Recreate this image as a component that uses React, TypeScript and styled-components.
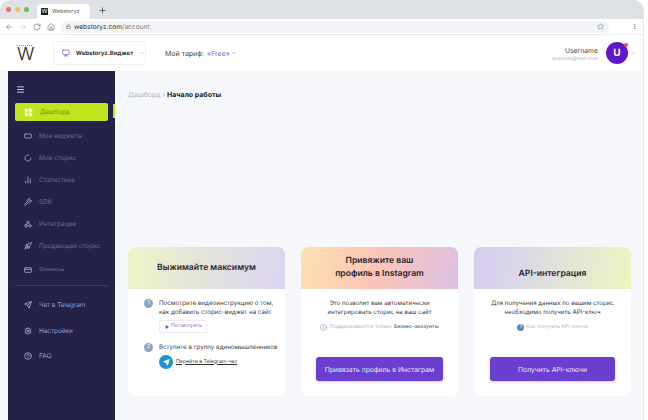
import React from 'react';
import styled, { createGlobalStyle } from 'styled-components';
import { ChevronDown, Plus, X, ArrowLeft, ArrowRight, RotateCw, Home, Lock, Star, MoreVertical, Monitor, Menu, LayoutGrid, RectangleHorizontal, LoaderCircle, BarChart2, Wrench, Shapes, Rocket, CreditCard, Send, Settings, CircleHelp, Play, Info } from 'lucide-react';

const Global = createGlobalStyle`
	html, body {
		margin: 0;
		padding: 0;
		background: #fff;
	}
	body {
		font-family: 'Inter', 'Noto Sans', sans-serif;
		text-rendering: geometricPrecision;
		width: 648px;
		height: 420px;
		overflow: hidden;
	}
`;

const Page = styled.div`
	width: 644px;
	height: 420px;
	display: flex;
	flex-direction: column;
	border-top-right-radius: 10px;
	border-top-left-radius: 10px;
	overflow: hidden;
	border-right: 1px solid #e6e8ec;
	box-sizing: border-box;
`;

const TabBar = styled.div`
	height: 19px;
	background: #dee1e6;
	display: flex;
	align-items: center;
	padding-left: 6px;
	flex-shrink: 0;
`;

const Dot = styled.span<{ $c: string }>`
	width: 5px;
	height: 5px;
	border-radius: 50%;
	margin-right: 4px;
	background: ${(p) => p.$c};
`;

const Tab = styled.div`
	width: 53px;
	height: 15px;
	margin-left: 4px;
	margin-top: 4px;
	background: #fff;
	border-radius: 4px 4px 0 0;
	display: flex;
	align-items: center;
	padding: 0 6px 0 4px;
	box-sizing: border-box;
	color: #555;
	font-size: 5.4px;
	gap: 4px;
`;

const Favicon = styled.span`
	width: 7px;
	height: 7px;
	background: #1b1b1b;
	color: #fff;
	font-size: 6px;
	line-height: 7px;
	text-align: center;
	flex-shrink: 0;
`;

const TabTitle = styled.span`
	flex: 1;
	white-space: nowrap;
`;

const NewTab = styled.span`
	margin-left: 8px;
	margin-top: 2px;
	display: flex;
	color: #444;
`;

const Toolbar = styled.div`
	height: 16px;
	background: #fff;
	display: flex;
	align-items: center;
	padding: 0 5px;
	gap: 6px;
	color: #70757a;
	flex-shrink: 0;
	border-bottom: 1px solid #eceef1;
	box-sizing: border-box;
`;

const Address = styled.div`
	flex: 1;
	height: 12px;
	border-radius: 6px;
	background: #f1f3f4;
	display: flex;
	align-items: center;
	padding: 0 5px;
	gap: 3px;
	margin-right: 16px;
	font-size: 6.6px;
	color: #80868b;
`;

const Host = styled.span`
	color: #333;
`;

const Url = styled.span`
	flex: 1;
`;

const Header = styled.div`
	height: 36px;
	background: #fff;
	display: flex;
	align-items: center;
	flex-shrink: 0;
	padding: 0 7px 0 17px;
`;

const Logo = styled.div`
	width: 15px;
	font-size: 18px;
	font-weight: 300;
	color: #222;
	line-height: 15px;
	margin-right: 21px;
	border-top: 1px dotted #999;
	padding-top: 1px;
`;

const WidgetSelect = styled.div`
	width: 93px;
	height: 24px;
	border: 1px solid #f0f1f4;
	border-radius: 3px;
	display: flex;
	align-items: center;
	padding-left: 8px;
	box-sizing: border-box;
	gap: 6px;
	font-size: 6px;
	font-weight: 700;
	color: #333;
	white-space: nowrap;
`;

const Plan = styled.div`
	margin-left: 19px;
	font-size: 7px;
	color: #444;
	display: flex;
	align-items: center;
	gap: 1px;
	white-space: nowrap;
`;

const PlanValue = styled.span`
	color: #7b63d6;
	margin-left: 2px;
`;

const User = styled.div`
	margin-left: auto;
	display: flex;
	align-items: center;
`;

const UserText = styled.div`
	text-align: right;
	margin-right: 8px;
	padding-top: 2px;
`;

const UserName = styled.div`
	font-size: 6.8px;
	color: #444;
	line-height: 10px;
`;

const UserMail = styled.div`
	font-size: 5px;
	color: #a9bad0;
	line-height: 7px;
`;

const Avatar = styled.div`
	position: relative;
	width: 22px;
	height: 22px;
	border-radius: 50%;
	background: #5f17c9;
	color: #fff;
	font-size: 10px;
	font-weight: 700;
	display: flex;
	align-items: center;
	justify-content: center;
	margin-right: 2px;
`;

const Badge = styled.span`
	position: absolute;
	top: 1px;
	right: 0;
	width: 4px;
	height: 4px;
	border-radius: 50%;
	background: #ef4d3c;
`;

const Body = styled.div`
	flex: 1;
	display: flex;
	background: #f5f7fb;
	min-height: 0;
	padding-left: 8px;
`;

const Sidebar = styled.nav`
	width: 107px;
	background: #25224a;
	flex-shrink: 0;
	display: flex;
	flex-direction: column;
	padding: 14px 0 0 7px;
	box-sizing: border-box;
	position: relative;
`;

const Burger = styled.div`
	height: 18px;
	margin-left: 1px;
	color: #fff;
	display: flex;
	align-items: flex-start;
`;

const ActiveItem = styled.div`
	width: 93px;
	height: 18px;
	border-radius: 2px;
	background: #bfe51c;
	display: flex;
	align-items: center;
	padding-left: 9px;
	box-sizing: border-box;
	gap: 7px;
	font-size: 6.4px;
	color: #6f8f20;
	margin-bottom: 4px;
`;

const ActiveMark = styled.span`
	position: absolute;
	right: 0;
	top: 33px;
	width: 2px;
	height: 14px;
	background: #bfe51c;
`;

const Item = styled.div<{ $gap?: number; $small?: boolean; $bright?: boolean }>`
	height: 22px;
	margin-top: ${(p) => p.$gap ?? 0}px;
	display: flex;
	align-items: center;
	padding-left: 9px;
	gap: 7px;
	font-size: ${(p) => (p.$small ? 5.6 : 6.4)}px;
	color: ${(p) => (p.$bright ? '#9c97c8' : '#6b6798')};
	white-space: nowrap;
	svg {
		color: #c6c4e4;
		flex-shrink: 0;
	}
`;

const Divider = styled.div`
	height: 1px;
	width: 94px;
	margin-top: 4px;
	background: #3a3762;
`;

const Main = styled.main`
	flex: 1;
	padding: 19px 13px 0 13px;
	display: flex;
	flex-direction: column;
	min-width: 0;
`;

const Crumbs = styled.div`
	font-size: 7px;
	color: #a9b9d0;
	line-height: 9px;
`;

const CrumbNow = styled.span`
	color: #222;
	font-weight: 700;
`;

const Cards = styled.div`
	margin-top: 148px;
	display: grid;
	grid-template-columns: repeat(3, 157px);
	gap: 16px;
`;

const Card = styled.section`
	height: 149px;
	background: #fff;
	border-radius: 7px;
	overflow: hidden;
	display: flex;
	flex-direction: column;
`;

const CardHead = styled.div<{ $bg: string; $low?: boolean }>`
	height: 42px;
	background: ${(p) => p.$bg};
	display: flex;
	align-items: center;
	justify-content: center;
	text-align: center;
	font-size: 8.6px;
	line-height: 13px;
	font-weight: 600;
	color: #2b2430;
	flex-shrink: 0;
	padding-top: ${(p) => (p.$low ? 12 : 0)}px;
	box-sizing: border-box;
`;

const StepBody = styled.div`
	padding: 10px 0 0 16px;
	display: flex;
	flex-direction: column;
`;

const Step = styled.div`
	display: flex;
	gap: 6px;
	font-size: 6.2px;
	line-height: 9px;
	color: #3a3a44;
	margin-bottom: 10px;
	white-space: nowrap;
`;

const StepNum = styled.span`
	width: 9px;
	height: 9px;
	border-radius: 50%;
	background: #8ea6c4;
	color: #fff;
	font-size: 5.5px;
	line-height: 9px;
	text-align: center;
	flex-shrink: 0;
`;

const WatchBtn = styled.div`
	width: 48px;
	height: 13px;
	border: 1px solid #e8ebf2;
	border-radius: 2px;
	display: flex;
	align-items: center;
	padding-left: 5px;
	gap: 2px;
	box-sizing: border-box;
	margin-top: 3px;
	font-size: 5.2px;
	color: #7b63d6;
`;

const TgRow = styled.div`
	display: flex;
	align-items: center;
	gap: 3px;
	margin-top: 3px;
	font-size: 5.2px;
	color: #333;
`;

const TgIcon = styled.span`
	width: 14px;
	height: 14px;
	border-radius: 50%;
	background: #1f93cf;
	color: #fff;
	display: flex;
	align-items: center;
	justify-content: center;
`;

const TgLink = styled.span`
	text-decoration: underline;
`;

const CenterBody = styled.div`
	flex: 1;
	padding-top: 10px;
	display: flex;
	flex-direction: column;
	align-items: center;
	text-align: center;
	font-size: 6.1px;
	line-height: 9px;
	color: #3a3a44;
`;

const Hint = styled.div`
	margin-top: 6px;
	display: flex;
	align-items: center;
	gap: 2px;
	font-size: 5.1px;
	color: #a9b9d0;
	white-space: nowrap;
`;

const HintStrong = styled.span`
	color: #64789a;
	font-weight: 600;
`;

const HelpDot = styled.span`
	width: 7px;
	height: 7px;
	border-radius: 50%;
	background: #5f86b5;
	color: #fff;
	font-size: 5px;
	line-height: 7px;
	text-align: center;
`;

const CardButton = styled.div<{ $w: number }>`
	width: ${(p) => p.$w}px;
	height: 24px;
	margin-top: auto;
	margin-bottom: 15px;
	border-radius: 3px;
	background: #6a3fd0;
	color: #e9e3fb;
	font-size: 6.8px;
	display: flex;
	align-items: center;
	justify-content: center;
	box-shadow: 0 1px 3px rgba(106, 63, 208, 0.3);
	white-space: nowrap;
`;

const App: React.FC = () => {
	return (
		<React.Fragment>
			<Global />
			<Page>
				<TabBar>
					<Dot $c='#ed6a5e' />
					<Dot $c='#f4bf4f' />
					<Dot $c='#61c554' />
					<Tab>
						<Favicon>W</Favicon>
						<TabTitle>Webstoryz</TabTitle>
						<X size={6} />
					</Tab>
					<NewTab><Plus size={9} /></NewTab>
				</TabBar>
				<Toolbar>
					<ArrowLeft size={8} />
					<ArrowRight size={8} color='#c0c4c8' />
					<RotateCw size={8} />
					<Home size={8} />
					<Address>
						<Lock size={5} color='#555' />
						<Url><Host>webstoryz.com</Host>/account</Url>
						<Star size={7} />
					</Address>
					<MoreVertical size={7} />
				</Toolbar>
				<Header>
					<Logo>W</Logo>
					<WidgetSelect>
						<Monitor size={8} color='#6a4fd0' />
						Webstoryz.Виджет
						<ChevronDown size={6} color='#aaa' />
					</WidgetSelect>
					<Plan>
						Мой тариф:<PlanValue>«Free»</PlanValue>
						<ChevronDown size={6} color='#7b63d6' />
					</Plan>
					<User>
						<UserText>
							<UserName>Username</UserName>
							<UserMail>example@mail.com</UserMail>
						</UserText>
						<Avatar>U<Badge /></Avatar>
						<ChevronDown size={6} color='#aaa' />
					</User>
				</Header>
				<Body>
					<Sidebar>
						<Burger><Menu size={9} /></Burger>
						<ActiveItem><LayoutGrid size={9} color='#fff' fill='#fff' />Дашборд</ActiveItem>
						<ActiveMark />
						<Item><RectangleHorizontal size={8} />Мои виджеты</Item>
						<Item><LoaderCircle size={8} />Мои сторис</Item>
						<Item><BarChart2 size={8} />Статистика</Item>
						<Item><Wrench size={8} />SDK</Item>
						<Item><Shapes size={8} />Интеграции</Item>
						<Item><Rocket size={8} />Продающая сторис</Item>
						<Item $small $gap={2}><CreditCard size={8} />Финансы</Item>
						<Divider />
						<Item $bright $gap={8}><Send size={8} />Чат в Telegram</Item>
						<Item $bright $gap={4}><Settings size={8} />Настройки</Item>
						<Item $bright $gap={3}><CircleHelp size={8} />FAQ</Item>
					</Sidebar>
					<Main>
						<Crumbs>Дашборд › <CrumbNow>Начало работы</CrumbNow></Crumbs>
						<Cards>
							<Card>
								<CardHead $bg='linear-gradient(100deg, #eef5c6 0%, #e2e2dc 50%, #dcd4f2 100%)'>Выжимайте максимум</CardHead>
								<StepBody>
									<Step>
										<StepNum>1</StepNum>
										<div>
											Посмотрите видеоинструкцию о том,<br />как добавить сторис-виджет на сайт
											<WatchBtn><Play size={4} fill='#6a3fd0' color='#6a3fd0' />Посмотреть</WatchBtn>
										</div>
									</Step>
									<Step>
										<StepNum>2</StepNum>
										<div>
											Вступите в группу единомышленников
											<TgRow>
												<TgIcon><Send size={7} fill='#fff' /></TgIcon>
												<TgLink>Перейти в Telegram-чат</TgLink>
											</TgRow>
										</div>
									</Step>
								</StepBody>
							</Card>
							<Card>
								<CardHead $bg='linear-gradient(100deg, #fde0b0 0%, #fbc4b8 50%, #dcc0e4 100%)'>Привяжите ваш<br />профиль в Instagram</CardHead>
								<CenterBody>
									Это позволит вам автоматически<br />интегрировать сторис на ваш сайт
									<Hint>
										<Info size={7} color='#7d93b5' />
										Поддерживаются только <HintStrong>Бизнес-аккаунты</HintStrong>
									</Hint>
									<CardButton $w={127}>Привязать профиль в Инстаграм</CardButton>
								</CenterBody>
							</Card>
							<Card>
								<CardHead $low $bg='linear-gradient(100deg, #d5cbf2 0%, #e0e0dc 50%, #ecf5c0 100%)'>API-интеграция</CardHead>
								<CenterBody>
									Для получения данных по вашим сторис<br />необходимо получить API-ключ
									<Hint>
										<HelpDot>?</HelpDot>
										Как получить API-ключи
									</Hint>
									<CardButton $w={125}>Получить API-ключи</CardButton>
								</CenterBody>
							</Card>
						</Cards>
					</Main>
				</Body>
			</Page>
		</React.Fragment>
	);
};

export default App;
